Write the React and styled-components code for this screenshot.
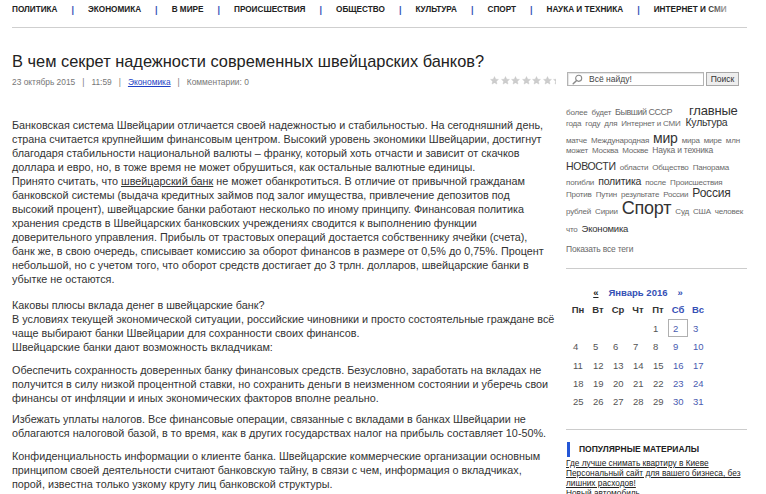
import React from 'react';
import styled, { createGlobalStyle } from 'styled-components';

const GlobalStyle = createGlobalStyle`
  html, body {
    margin: 0;
    padding: 0;
    overflow: hidden;
    background: #fff;
  }
  body {
    font-family: "Liberation Sans", Arial, sans-serif;
    color: #333;
  }
`;

const menu = ['Политика', 'Экономика', 'В мире', 'Происшествия', 'Общество', 'Культура', 'Спорт', 'Наука и техника', 'Интернет и СМИ'];

const article = [
  {
    gap: 12,
    lines: [
      'Банковская система Швейцарии отличается своей надежностью и стабильностью. На сегодняшний день,',
      'страна считается крупнейшим финансовым центром. Высокий уровень экономики Швейцарии, достигнут',
      'благодаря стабильности национальной валюты – франку, который хоть отчасти и зависит от скачков',
      'доллара и евро, но, в тоже время не может обрушиться, как остальные валютные единицы.',
      'LINK',
      'банковской системы (выдача кредитных займов под залог имущества, привлечение депозитов под',
      'высокий процент), швейцарские банки работают несколько по иному принципу. Финансовая политика',
      'хранения средств в Швейцарских банковских учреждениях сводится к выполнению функции',
      'доверительного управления. Прибыль от трастовых операций достается собственнику ячейки (счета),',
      'банк же, в свою очередь, списывает комиссию за оборот финансов в размере от 0,5% до 0,75%. Процент',
      'небольшой, но с учетом того, что оборот средств достигает до 3 трлн. долларов, швейцарские банки в',
      'убытке не остаются.',
    ],
  },
  {
    gap: 9,
    lines: [
      'Каковы плюсы вклада денег в швейцарские банк?',
      'В условиях текущей экономической ситуации, российские чиновники и просто состоятельные граждане всё',
      'чаще выбирают банки Швейцарии для сохранности своих финансов.',
      'Швейцарские банки дают возможность вкладчикам:',
    ],
  },
  {
    gap: 7,
    lines: [
      'Обеспечить сохранность доверенных банку финансовых средств. Безусловно, заработать на вкладах не',
      'получится в силу низкой процентной ставки, но сохранить деньги в неизменном состоянии и уберечь свои',
      'финансы от инфляции и иных экономических факторов вполне реально.',
    ],
  },
  {
    gap: 9,
    lines: [
      'Избежать уплаты налогов. Все финансовые операции, связанные с вкладами в банках Швейцарии не',
      'облагаются налоговой базой, в то время, как в других государствах налог на прибыль составляет 10-50%.',
    ],
  },
  {
    gap: 9,
    lines: [
      'Конфиденциальность информации о клиенте банка. Швейцарские коммерческие организации основным',
      'принципом своей деятельности считают банковскую тайну, в связи с чем, информация о вкладчиках,',
      'порой, известна только узкому кругу лиц банковской структуры.',
    ],
  },
];

// tag cloud rows: [row height, tags: [word, size, extra left space, letter spacing]]
const cloud = [
  [13.6, [['более'], ['будет'], ['Бывший СССР', 9, 0, -0.5], ['главные', 13, 13]]],
  [14, [['года'], ['году'], ['для'], ['Интернет и СМИ'], ['Культура', 10.5, 1]]],
  [14.6, [['матче'], ['Международная'], ['мир', 14], ['мира'], ['мире'], ['млн']]],
  [15.3, [['может'], ['Москва'], ['Москве'], ['Наука и техника', 8.5]]],
  [15, [['НОВОСТИ', 10.5, 0, -0.3], ['области'], ['Общество'], ['Панорама']]],
  [10.7, [['погибли'], ['политика', 10.5], ['после'], ['Происшествия']]],
  [11.9, [['Против'], ['Путин'], ['результате'], ['России'], ['Россия', 12]]],
  [25.2, [['рублей'], ['Сирии'], ['Спорт', 18], ['Суд'], ['США'], ['человек']]],
  [20.8, [['что'], ['Экономика', 9.5]]],
];

const weekDays = ['Пн', 'Вт', 'Ср', 'Чт', 'Пт', 'Сб', 'Вс'];
const days = [null, null, null, null, 1, 2, 3];
for (let d = 4; d <= 31; d += 1) days.push(d);

const Page = styled.div`
  width: 766px;
  height: 494px;
  overflow: hidden;
`;

const Nav = styled.nav`
  position: relative;
  margin: 0 19px 0 12px;
  padding-top: 5px;
  height: 22px;
  border-bottom: 1px solid #cfcfcf;
  display: flex;
  align-items: flex-start;
  gap: 14px;
  white-space: nowrap;
  overflow: hidden;

  &::after {
    content: '';
    position: absolute;
    top: 0;
    left: 694px;
    width: 44px;
    height: 22px;
    background: linear-gradient(to right, rgba(255, 255, 255, 0), #fff 80%);
  }
`;

const NavItem = styled.a`
  font-size: 8.2px;
  line-height: 10px;
  font-weight: bold;
  text-transform: uppercase;
  color: #222;
  text-decoration: none;
`;

const NavSep = styled.span`
  font-size: 9px;
  line-height: 10px;
  font-weight: bold;
  color: #3553b8;
`;

const Main = styled.div`
  display: flex;
  gap: 10px;
  padding: 0 19px 0 12px;
`;

const Content = styled.main`
  width: 544px;
  flex: none;
`;

const Title = styled.h1`
  margin: 23px 0 0;
  font-size: 16.4px;
  line-height: 20px;
  font-weight: normal;
  color: #222;
`;

const MetaRow = styled.div`
  margin-top: 5px;
  display: flex;
  justify-content: space-between;
  align-items: center;
  height: 12px;
`;

const Meta = styled.div`
  display: flex;
  gap: 7px;
  font-size: 8.4px;
  line-height: 12px;
  color: #777;
`;

const MetaLink = styled.a`
  color: #1f3fc4;
  text-decoration: underline;
`;

const Stars = styled.div`
  width: 66px;
  display: flex;
  gap: 1px;
  overflow: hidden;
  margin-top: -4px;
`;

const Body = styled.div`
  margin-top: 30px;
  font-size: 10.8px;
  line-height: 14px;
  color: #333;
`;

const Para = styled.p`
  margin: 0 0 ${(p) => p.$gap}px;
`;

const Line = styled.span`
  display: block;
  white-space: nowrap;
`;

const TextLink = styled.a`
  color: #333;
  text-decoration: underline;
`;

const Sidebar = styled.aside`
  width: 181px;
  flex: none;
`;

const SearchForm = styled.form`
  margin: 44px 0 0 1px;
  display: flex;
  gap: 2px;
  height: 14px;
`;

const SearchBox = styled.label`
  width: 137px;
  box-sizing: border-box;
  border: 1px solid #b4b4b4;
  box-shadow: inset 1px 1px 1px #e4e4e4;
  display: flex;
  align-items: center;
  gap: 6px;
  padding-left: 4px;
  font-size: 8.5px;
  color: #444;
`;

const SearchButton = styled.button`
  width: 33px;
  padding: 0;
  box-sizing: border-box;
  border: 1px solid #a8a8a8;
  background: #eeeeee;
  font-family: inherit;
  font-size: 8.5px;
  color: #333;
`;

const Cloud = styled.div`
  margin-top: 17.5px;
  letter-spacing: -0.2px;
`;

const TagRow = styled.div`
  height: ${(p) => p.$h}px;
  display: flex;
  align-items: baseline;
  gap: 4px;
  white-space: nowrap;
`;

const Tag = styled.a`
  margin-left: ${(p) => p.$ml}px;
  font-size: ${(p) => p.$size}px;
  letter-spacing: ${(p) => p.$ls}px;
  line-height: 1;
  color: ${(p) => (p.$size > 9 ? '#333' : '#6a6a6a')};
  text-decoration: none;
`;

const ShowAll = styled.a`
  display: block;
  font-size: 8.5px;
  line-height: 1;
  color: #6a6a6a;
`;

const Divider = styled.hr`
  margin: ${(p) => p.$top}px 0 0;
  border: 0;
  border-top: 1px solid #cccccc;
  height: 0;
`;

const Calendar = styled.div`
  margin: 18px 0 0 2px;
  width: 140px;
`;

const MonthBar = styled.div`
  display: flex;
  justify-content: center;
  gap: 10px;
  font-size: 9.5px;
  line-height: 12px;
  font-weight: bold;
  color: #3550b5;
`;

const Arrow = styled.a`
  color: ${(p) => (p.$prev ? '#222' : '#3550b5')};
  text-decoration: ${(p) => (p.$prev ? 'underline' : 'none')};
`;

const DayGrid = styled.div`
  margin-top: 2px;
  display: grid;
  grid-template-columns: repeat(7, 20px);
  grid-auto-rows: 18.4px;
  font-size: 9.5px;
`;

const WeekDay = styled.div`
  display: flex;
  align-items: center;
  justify-content: center;
  font-weight: bold;
  color: ${(p) => (p.$weekend ? '#3550b5' : '#333')};
`;

const Day = styled.div`
  display: flex;
  align-items: center;
  padding-left: 4px;
  box-sizing: border-box;
  color: ${(p) => (p.$weekend ? '#4a5cb0' : '#555')};
  border: 1px solid ${(p) => (p.$today ? '#b0b0b0' : 'transparent')};
`;

const Popular = styled.section`
  margin-top: 12px;
`;

const PopularHead = styled.h3`
  margin: 0 0 1px 1px;
  height: 15px;
  border-left: 3px solid #2456d6;
  padding-left: 9px;
  display: flex;
  align-items: center;
  font-size: 8.5px;
  font-weight: bold;
  color: #222;
`;

const PopularLink = styled.a`
  display: block;
  font-size: 8.3px;
  line-height: 10.2px;
  color: #222;
  text-decoration: underline;
  white-space: nowrap;
`;

const Star = () => (
  <svg width="9" height="9" viewBox="0 0 24 24" style={{ flex: 'none', marginRight: 0.5 }}>
    <path
      d="M12 1.5l3.2 6.9 7.3.8-5.5 5 1.6 7.3L12 17.8l-6.6 3.7L7 14.2l-5.5-5 7.3-.8z"
      fill="#cdcdcd"
      stroke="#c0c0c0"
      strokeWidth="1"
    />
  </svg>
);

const Lens = () => (
  <svg width="11" height="11" viewBox="0 0 12 12">
    <circle cx="7.3" cy="4.7" r="3.3" fill="none" stroke="#8a8a8a" strokeWidth="1.2" />
    <path d="M5 7L1.3 10.7" stroke="#8a8a8a" strokeWidth="1.6" strokeLinecap="round" />
  </svg>
);

const App = function () {
  return (
    <Page>
      <GlobalStyle />
      <Nav>
        {menu.map((item, i) => (
          <React.Fragment key={item}>
            {i > 0 && <NavSep>|</NavSep>}
            <NavItem href="#">{item}</NavItem>
          </React.Fragment>
        ))}
        <NavSep>|</NavSep>
      </Nav>

      <Main>
        <Content>
          <Title>В чем секрет надежности современных швейцарских банков?</Title>
          <MetaRow>
            <Meta>
              <span>23 октябрь 2015</span>
              <span>|</span>
              <span>11:59</span>
              <span>|</span>
              <MetaLink href="#">Экономика</MetaLink>
              <span>|</span>
              <span>Комментарии: 0</span>
            </Meta>
            <Stars>
              {[0, 1, 2, 3, 4, 5, 6].map((s) => <Star key={s} />)}
            </Stars>
          </MetaRow>

          <Body>
            {article.map((para, i) => (
              <Para key={i} $gap={para.gap}>
                {para.lines.map((line) => (line === 'LINK' ? (
                  <Line key={line}>
                    Принято считать, что <TextLink href="#">швейцарский банк</TextLink> не может обанкротиться. В отличие от привычной гражданам
                  </Line>
                ) : (
                  <Line key={line}>{line}</Line>
                )))}
              </Para>
            ))}
          </Body>
        </Content>

        <Sidebar>
          <SearchForm onSubmit={(e) => e.preventDefault()}>
            <SearchBox>
              <Lens />
              <span>Всё найду!</span>
            </SearchBox>
            <SearchButton type="submit">Поиск</SearchButton>
          </SearchForm>

          <Cloud>
            {cloud.map(([h, tags], i) => (
              <TagRow key={i} $h={h}>
                {tags.map(([word, size = 8, ml = 0, ls = -0.2]) => (
                  <Tag key={word} href="#" $size={size} $ml={ml} $ls={ls}>{word}</Tag>
                ))}
              </TagRow>
            ))}
            <ShowAll>Показать все теги</ShowAll>
          </Cloud>

          <Divider $top={14.6} />

          <Calendar>
            <MonthBar>
              <Arrow $prev href="#">«</Arrow>
              <span>Январь 2016</span>
              <Arrow href="#">»</Arrow>
            </MonthBar>
            <DayGrid>
              {weekDays.map((w, i) => <WeekDay key={w} $weekend={i > 4}>{w}</WeekDay>)}
              {days.map((d, i) => (
                <Day key={i} $weekend={i % 7 > 4} $today={d === 2}>{d}</Day>
              ))}
            </DayGrid>
          </Calendar>

          <Divider $top={17.6} />

          <Popular>
            <PopularHead>ПОПУЛЯРНЫЕ МАТЕРИАЛЫ</PopularHead>
            <PopularLink href="#">Где лучше снимать квартиру в Киеве</PopularLink>
            <PopularLink href="#">
              Персональный сайт для вашего бизнеса, без
              <br />
              лишних расходов!
            </PopularLink>
            <PopularLink href="#">Новый автомобиль</PopularLink>
          </Popular>
        </Sidebar>
      </Main>
    </Page>
  );
};

export default App;
